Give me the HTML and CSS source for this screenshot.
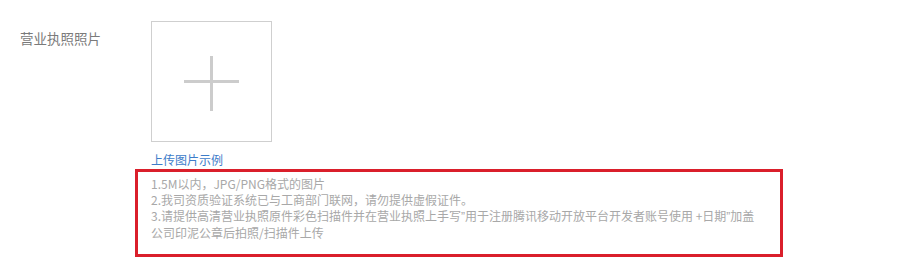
FILE: index.html
```html
<!DOCTYPE html>
<html lang="zh-CN">
<head>
<meta charset="utf-8">
<title>营业执照照片</title>
<link rel="stylesheet" href="styles.css">
</head>
<body>
<div class="form-row">
  <div class="form-label">营业执照照片</div>
  <div class="form-field">
    <div class="upload-box" role="button" aria-label="上传">
      <span class="plus-h"></span>
      <span class="plus-v"></span>
    </div>
    <a class="example-link" href="#">上传图片示例</a>
    <div class="tips">
      <p>1.5M以内，JPG/PNG格式的图片</p>
      <p>2.我司资质验证系统已与工商部门联网，请勿提供虚假证件。</p>
      <p>3.请提供高清营业执照原件彩色扫描件并在营业执照上手写<span class="q">”</span>用于注册腾讯移动开放平台开发者账号使用 +日期<span class="q">”</span>加盖<br>公司印泥公章后拍照/扫描件上传</p>
    </div>
  </div>
</div>
</body>
</html>
```
FILE: styles.css
```css
html, body {
  margin: 0;
  padding: 0;
  background: #fff;
}
body {
  font-family: "Noto Sans CJK SC", "Liberation Sans", sans-serif;
  font-size: 12px;
  line-height: 16px;
}
.form-row {
  display: flex;
  align-items: flex-start;
}
.form-label {
  width: 131px;
  padding-left: 20px;
  padding-top: 30px;
  font-size: 13.5px;
  line-height: 16px;
  color: #7a7a7a;
}
.form-field {
  display: flex;
  flex-direction: column;
  align-items: flex-start;
  padding-top: 21px;
}
.upload-box {
  position: relative;
  box-sizing: border-box;
  width: 121px;
  height: 121px;
  border: 1px solid #cfcfcf;
  background: #fff;
}
.plus-h {
  position: absolute;
  left: 32px;
  top: 58px;
  width: 55px;
  height: 3px;
  background: #cccccc;
}
.plus-v {
  position: absolute;
  left: 58px;
  top: 34px;
  width: 3px;
  height: 55px;
  background: #cccccc;
}
.example-link {
  margin-top: 10px;
  font-size: 12px;
  line-height: 16px;
  color: #3d7cc9;
  text-decoration: none;
}
.tips {
  box-sizing: border-box;
  margin-top: 1px;
  margin-left: -16px;
  width: 648px;
  border: 3px solid #da1f2b;
  padding: 4px 10px 13px 13px;
  color: #a8a8a8;
  font-size: 12px;
  line-height: 16px;
  white-space: nowrap;
}
.tips p {
  margin: 0;
}
.tips .q {
  font-family: "Liberation Sans", sans-serif;
}
```
